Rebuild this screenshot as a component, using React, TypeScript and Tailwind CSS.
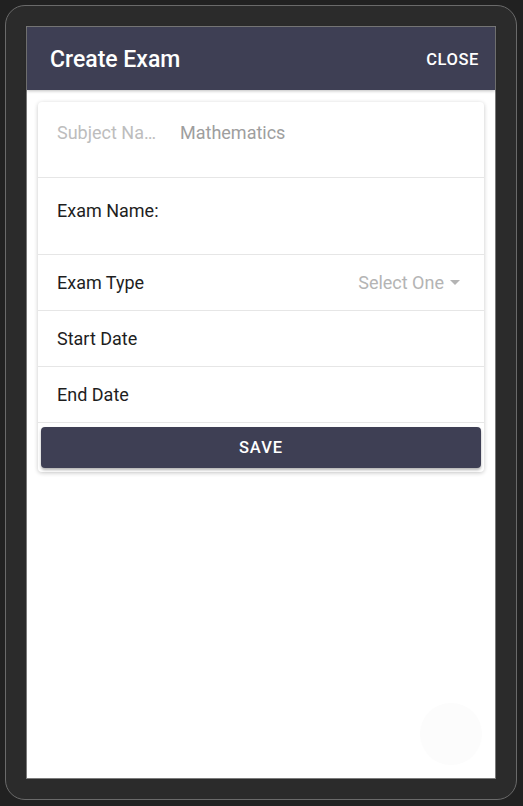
export default function App() {
  return (
    <div className="min-h-[806px] w-[523px] bg-[#212121] p-[5px]" style={{ fontFamily: "Roboto, 'Liberation Sans', sans-serif" }}>
      <div className="h-[795px] w-[512px] rounded-[20px] border border-[#6a6a6a] bg-[#2b2b2b] p-[20px]">
        <div className="relative flex h-full w-full flex-col border border-[#7a7a7a] bg-white">
          <div className="flex h-[63px] items-center justify-between bg-[#3e3f54] pl-[23px] pr-[16px] pt-[3px] shadow-[0_1px_3px_rgba(0,0,0,0.25)]">
            <span className="text-[23px] font-medium text-white">Create Exam</span>
            <span className="text-[16.5px] font-medium tracking-[0.6px] text-white">CLOSE</span>
          </div>
          <div className="mx-[11px] mt-[12px] rounded-[4px] bg-white shadow-[0_1px_4px_rgba(0,0,0,0.22)]">
            <div className="flex h-[76px] items-start border-b border-[#e6e6e6] pl-[19px] pt-[17px] text-[18px]">
              <span className="w-[101px] truncate text-[#bdbdbd]">Subject Name</span>
              <span className="ml-[22px] text-[#9e9e9e]">Mathematics</span>
            </div>
            <div className="flex h-[77px] items-start border-b border-[#e6e6e6] pl-[19px] pt-[19px] text-[18px] text-[#1e1e1e]">
              <span>Exam Name:</span>
            </div>
            <div className="flex h-[56px] items-center justify-between border-b border-[#e6e6e6] pl-[19px] pr-[24px] text-[18px]">
              <span className="text-[#1e1e1e]">Exam Type</span>
              <span className="flex items-center gap-[6px] text-[#b4b4b4]">
                Select One
                <svg width="10" height="5" viewBox="0 0 10 5"><path d="M0 0 L10 0 L5 5 Z" fill="#b4b4b4" /></svg>
              </span>
            </div>
            <div className="flex h-[56px] items-center border-b border-[#e6e6e6] pl-[19px] text-[18px] text-[#1e1e1e]">
              <span>Start Date</span>
            </div>
            <div className="flex h-[56px] items-center border-b border-[#e6e6e6] pl-[19px] text-[18px] text-[#1e1e1e]">
              <span>End Date</span>
            </div>
            <div className="px-[3px] pb-[4px] pt-[4px]">
              <div className="flex h-[41px] items-center justify-center rounded-[4px] bg-[#3e3f54] pt-[1px] text-[16.5px] font-medium tracking-[1px] text-white shadow-[0_2px_3px_rgba(0,0,0,0.3)]">
                SAVE
              </div>
            </div>
          </div>
          <div className="absolute bottom-[13px] right-[13px] h-[62px] w-[62px] rounded-full bg-[#fcfcfc]"></div>
        </div>
      </div>
    </div>
  );
}
